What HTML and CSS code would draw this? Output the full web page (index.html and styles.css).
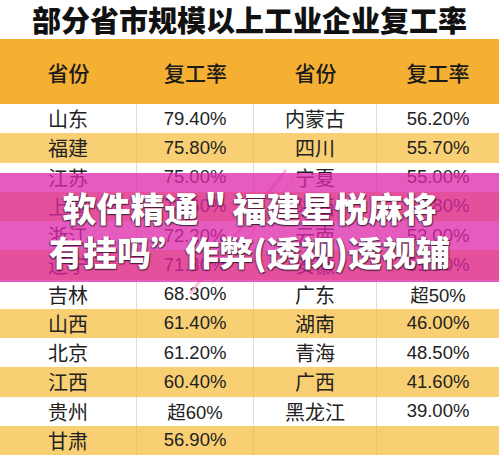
FILE: index.html
```html
<!DOCTYPE html>
<html lang="zh-CN">
<head>
  <meta charset="UTF-8" />
  <meta name="viewport" content="width=device-width, initial-scale=1.0">
  <title>部分省市规模以上工业企业复工率</title>
  <link rel="stylesheet" href="styles.css">
</head>
<body>

  <div class="page">
    <h1 class="title">部分省市规模以上工业企业复工率</h1>

    <!-- 表格 -->
    <div class="table">
      <div class="row head">
        <div class="cell">省份</div>
        <div class="cell">复工率</div>
        <div class="cell">省份</div>
        <div class="cell">复工率</div>
      </div>
      <div class="row">
        <div class="cell">山东</div><div class="cell num">79.40%</div>
        <div class="cell">内蒙古</div><div class="cell num">56.20%</div>
      </div>
      <div class="row alt">
        <div class="cell">福建</div><div class="cell num">75.80%</div>
        <div class="cell">四川</div><div class="cell num">55.70%</div>
      </div>
      <div class="row">
        <div class="cell">江苏</div><div class="cell num">75.00%</div>
        <div class="cell">宁夏</div><div class="cell num">55.00%</div>
      </div>
      <div class="row alt">
        <div class="cell">上海</div><div class="cell num">73.60%</div>
        <div class="cell">陕西</div><div class="cell num">53.80%</div>
      </div>
      <div class="row">
        <div class="cell">浙江</div><div class="cell num">72.20%</div>
        <div class="cell">云南</div><div class="cell num">53.00%</div>
      </div>
      <div class="row alt">
        <div class="cell">辽宁</div><div class="cell num">71.30%</div>
        <div class="cell">安徽</div><div class="cell num">51.50%</div>
      </div>
      <div class="row">
        <div class="cell">吉林</div><div class="cell num">68.30%</div>
        <div class="cell">广东</div><div class="cell num">超50%</div>
      </div>
      <div class="row alt">
        <div class="cell">山西</div><div class="cell num">61.40%</div>
        <div class="cell">湖南</div><div class="cell num">46.00%</div>
      </div>
      <div class="row">
        <div class="cell">北京</div><div class="cell num">61.20%</div>
        <div class="cell">青海</div><div class="cell num">48.50%</div>
      </div>
      <div class="row alt">
        <div class="cell">江西</div><div class="cell num">60.40%</div>
        <div class="cell">广西</div><div class="cell num">41.60%</div>
      </div>
      <div class="row">
        <div class="cell">贵州</div><div class="cell num">超60%</div>
        <div class="cell">黑龙江</div><div class="cell num">39.00%</div>
      </div>
      <div class="row alt">
        <div class="cell">甘肃</div><div class="cell num">56.90%</div>
        <div class="cell"></div><div class="cell num"></div>
      </div>
    </div>

    <!-- 水印斜线 -->
    <svg class="stamp" width="120" height="130" viewBox="0 0 120 130">
      <path d="M104 2 L8 126" stroke="#f7a8cf" stroke-width="3" fill="none" opacity="0.7"/>
      <path d="M112 10 L30 116" stroke="#f7a8cf" stroke-width="1.5" fill="none" opacity="0.5"/>
    </svg>

    <!-- 标题横幅 -->
    <div class="banner">
      <div class="banner-line">软件精通＂福建星悦麻将</div>
      <div class="banner-line">有挂吗”作弊(透视)透视辅</div>
    </div>
  </div>

</body>
</html>
```

FILE: styles.css
```css
body {
  margin: 0;
  background-color: #fff;
  font-family: "Liberation Sans", "Noto Sans CJK SC", sans-serif;
  color: #222;
}

.page {
  position: relative;
  width: 499px;
  height: 456px;
  overflow: hidden;
}

.title {
  margin: 0;
  height: 39px;
  line-height: 39px;
  font-family: "Noto Sans CJK SC", sans-serif;
  font-size: 29px;
  font-weight: 900;
  text-align: center;
  color: #111;
}

.table {
  display: flex;
  flex-direction: column;
}

.row {
  display: grid;
  grid-template-columns: 137px 117px 123px 1fr;
  height: 29.25px;
  background-color: #fff;
}

.row.alt {
  background-color: #f8cf72;
}

.row.head {
  height: 65px;
  background-color: #f5b034;
}

.cell {
  display: flex;
  align-items: center;
  justify-content: center;
  font-family: "Noto Sans CJK SC", sans-serif;
  font-size: 20px;
  border-right: 1px solid #dcdcdc;
}

.row.alt .cell {
  border-right-color: #ecc26a;
}

.row.head .cell {
  border-right: none;
  font-size: 21px;
  font-weight: 500;
  color: #1a1a1a;
}

.cell:last-child {
  border-right: none;
}

.cell.num {
  font-family: "Liberation Sans", "Noto Sans CJK SC", sans-serif;
  font-size: 18.5px;
}

/* 覆盖的横幅 */
.banner {
  position: absolute;
  top: 173px;
  left: 0;
  right: 0;
  height: 109px;
  padding-top: 13px;
  box-sizing: border-box;
  background-color: rgba(222, 40, 170, 0.76);
  text-align: center;
}

.banner-line {
  height: 44px;
  line-height: 44px;
  font-family: "Noto Sans CJK SC", sans-serif;
  font-size: 34px;
  font-weight: 900;
  color: #fff;
  white-space: nowrap;
  text-shadow: 1px 1px 1px rgba(40, 20, 40, 0.75), -1px 1px 1px rgba(40, 20, 40, 0.5);
}

.stamp {
  position: absolute;
  top: 168px;
  left: 182px;
  pointer-events: none;
}
```
